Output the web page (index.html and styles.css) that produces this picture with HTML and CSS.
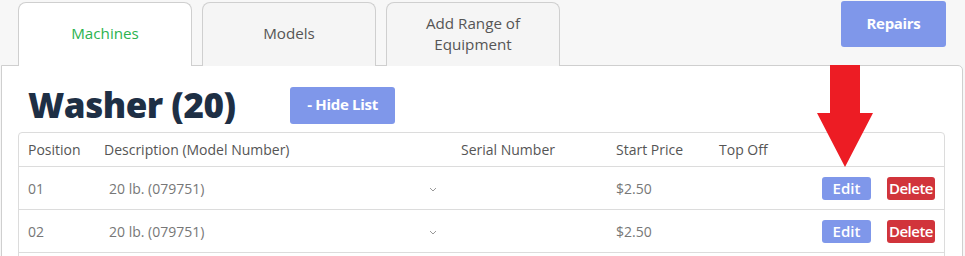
FILE: index.html
```html
<!DOCTYPE html>
<html>
<head>
<meta charset="utf-8">
<link rel="stylesheet" href="styles.css">
</head>
<body>
<div class="page">
  <div class="topbar">
    <div class="tabs">
      <div class="tab active">Machines</div>
      <div class="tab">Models</div>
      <div class="tab">Add Range of<br>Equipment</div>
    </div>
    <button class="btn-repairs">Repairs</button>
  </div>
  <div class="panel">
    <div class="heading-row">
      <h1 class="title">Washer (20)</h1>
      <button class="btn-hide">- Hide List</button>
    </div>
    <div class="table">
      <div class="row head">
        <div>Position</div>
        <div>Description (Model Number)</div>
        <div>Serial Number</div>
        <div>Start Price</div>
        <div>Top Off</div>
        <div></div>
      </div>
      <div class="row">
        <div>01</div>
        <div class="select"><span>20 lb. (079751)</span><svg class="chev" width="8" height="5" viewBox="0 0 8 5"><path d="M1 1 L4 4 L7 1" fill="none" stroke="#999" stroke-width="1"/></svg></div>
        <div></div>
        <div>$2.50</div>
        <div></div>
        <div class="actions"><span class="btn-edit">Edit</span><span class="btn-del">Delete</span></div>
      </div>
      <div class="row">
        <div>02</div>
        <div class="select"><span>20 lb. (079751)</span><svg class="chev" width="8" height="5" viewBox="0 0 8 5"><path d="M1 1 L4 4 L7 1" fill="none" stroke="#999" stroke-width="1"/></svg></div>
        <div></div>
        <div>$2.50</div>
        <div></div>
        <div class="actions"><span class="btn-edit">Edit</span><span class="btn-del">Delete</span></div>
      </div>
      <div class="row empty"></div>
    </div>
  </div>
  <svg class="arrow" width="58" height="103" viewBox="0 0 58 103">
    <polygon points="13,0 43,0 43,48 56,48 28,102 0,48 13,48" fill="#ed1c24"/>
  </svg>
</div>
</body>
</html>
```
FILE: styles.css
```css
* { box-sizing: border-box; }
html, body { margin: 0; padding: 0; }
body {
  background: #f7f7f7;
  font-family: "Open Sans", "Liberation Sans", sans-serif;
  width: 965px;
  height: 256px;
  overflow: hidden;
}
.page { position: relative; }
.topbar {
  display: flex;
  align-items: flex-start;
  height: 65px;
  padding-left: 18px;
  padding-right: 19px;
}
.tabs {
  display: flex;
  gap: 10px;
  padding-top: 2px;
}
.tab {
  width: 174px;
  height: 64px;
  border: 1px solid #cfcfcf;
  border-bottom: none;
  border-radius: 8px 8px 0 0;
  background: #f5f5f5;
  display: flex;
  align-items: center;
  justify-content: center;
  text-align: center;
  color: #555;
  font-size: 15.2px;
  line-height: 20.8px;
  padding-bottom: 2px;
  position: relative;
  z-index: 1;
}
.tab.active {
  background: #fff;
  color: #2bb34f;
}
.btn-repairs {
  margin-left: auto;
  margin-top: 1px;
  width: 105px;
  height: 46px;
  border: none;
  border-radius: 3px;
  background: #7f97ea;
  color: #fff;
  font-family: "Open Sans", sans-serif;
  font-weight: 700;
  font-size: 15px;
  letter-spacing: -0.3px;
  padding: 0 0 2px;
}
.panel {
  margin-left: 1px;
  width: 962px;
  height: 200px;
  background: #fff;
  border: 1px solid #cfcfcf;
  border-radius: 0 5px 0 0;
  padding: 18px 16px 0 16px;
}
.heading-row {
  display: flex;
  align-items: center;
  height: 41px;
  padding-left: 10px;
}
.title {
  margin: 0;
  font-family: "Open Sans", sans-serif;
  font-weight: 800;
  font-size: 35px;
  letter-spacing: -0.5px;
  color: #1e2f45;
  line-height: 40px;
  width: 262px;
}
.btn-hide {
  width: 105px;
  height: 37px;
  margin-top: 1px;
  border: none;
  border-radius: 3px;
  background: #7f97ea;
  color: #fff;
  font-family: "Open Sans", sans-serif;
  font-weight: 700;
  font-size: 15px;
  letter-spacing: -0.3px;
  padding: 0 0 2px;
}
.table {
  margin-top: 7px;
  width: 927px;
  border: 1px solid #dcdcdc;
  border-radius: 4px;
}
.row {
  display: grid;
  grid-template-columns: 76px 357px 155px 103px 103px 1fr;
  align-items: center;
  height: 43px;
  padding-left: 9px;
  border-bottom: 1px solid #dcdcdc;
  font-size: 14px;
  color: #777;
}
.row.head {
  height: 34px;
  color: #555;
  font-size: 14px;
}
.row.empty { border-bottom: none; }
.select {
  display: flex;
  align-items: center;
  padding-left: 5px;
  padding-right: 24px;
}
.select span { flex: 1; }
.chev { margin-top: 2px; }
.actions {
  display: flex;
  gap: 16px;
}
.btn-edit, .btn-del {
  height: 23px;
  border-radius: 3px;
  color: #fff;
  font-weight: 600;
  font-size: 15px;
  display: flex;
  align-items: center;
  justify-content: center;
  padding-bottom: 1px;
}
.btn-edit { width: 49px; background: #7f97ea; }
.btn-del { width: 48px; background: #d1343b; letter-spacing: -0.5px; }
.arrow {
  position: absolute;
  left: 817px;
  top: 65px;
  z-index: 5;
}
```
